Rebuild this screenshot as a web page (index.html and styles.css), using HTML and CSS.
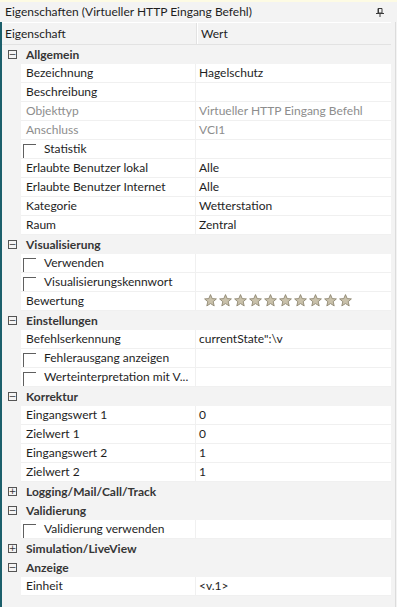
FILE: index.html
```html
<!DOCTYPE html>
<html>
<head>
    <meta charset="UTF-8">
    <title>Eigenschaften</title>
    <link rel="stylesheet" href="styles.css">
</head>
<body>
    <div class="topline"></div>
    <div class="titlebar">
        <span>Eigenschaften (Virtueller HTTP Eingang Befehl)</span>
        <svg class="pin" width="8" height="9" viewBox="0 0 8 9">
            <path d="M2 0.5h4v4.5H2z" fill="none" stroke="#3a3a3a"/>
            <path d="M2.5 0.5v4.5" stroke="#3a3a3a"/>
            <path d="M0 5.5h8" stroke="#3a3a3a"/>
            <path d="M4 5.5v3.5" stroke="#3a3a3a"/>
        </svg>
    </div>

    <div class="panel">
        <div class="grid">
            <div class="header">
                <div class="hcell name-col">Eigenschaft</div>
                <div class="hcell value-col">Wert</div>
            </div>

            <div class="cat"><span class="exp">&minus;</span>Allgemein</div>
            <div class="row"><div class="name">Bezeichnung</div><div class="value">Hagelschutz</div></div>
            <div class="row"><div class="name">Beschreibung</div><div class="value"></div></div>
            <div class="row dis"><div class="name">Objekttyp</div><div class="value">Virtueller HTTP Eingang Befehl</div></div>
            <div class="row dis"><div class="name">Anschluss</div><div class="value">VCI1</div></div>
            <div class="row"><div class="name"><span class="check"></span>Statistik</div><div class="value"></div></div>
            <div class="row"><div class="name">Erlaubte Benutzer lokal</div><div class="value">Alle</div></div>
            <div class="row"><div class="name">Erlaubte Benutzer Internet</div><div class="value">Alle</div></div>
            <div class="row"><div class="name">Kategorie</div><div class="value">Wetterstation</div></div>
            <div class="row"><div class="name">Raum</div><div class="value">Zentral</div></div>

            <div class="cat"><span class="exp">&minus;</span>Visualisierung</div>
            <div class="row"><div class="name"><span class="check"></span>Verwenden</div><div class="value"></div></div>
            <div class="row"><div class="name"><span class="check"></span>Visualisierungskennwort</div><div class="value"></div></div>
            <div class="row"><div class="name">Bewertung</div>
                <div class="value stars">
                    <svg width="150" height="13" viewBox="0 0 150 13">
                        <defs>
                            <path id="star" d="M6.5 0.6l1.7 4 4.2 0.3-3.2 2.8 1 4.2-3.7-2.3-3.7 2.3 1-4.2-3.2-2.8 4.2-0.3z"/>
                        </defs>
                        <g fill="#c9c1ab" stroke="#8f8772" stroke-width="0.9">
                            <use href="#star" x="0"/>
                            <use href="#star" x="15"/>
                            <use href="#star" x="30"/>
                            <use href="#star" x="45"/>
                            <use href="#star" x="60"/>
                            <use href="#star" x="75"/>
                            <use href="#star" x="90"/>
                            <use href="#star" x="105"/>
                            <use href="#star" x="120"/>
                            <use href="#star" x="135"/>
                        </g>
                    </svg>
                </div>
            </div>

            <div class="cat"><span class="exp">&minus;</span>Einstellungen</div>
            <div class="row"><div class="name">Befehlserkennung</div><div class="value">currentState":\v</div></div>
            <div class="row"><div class="name"><span class="check"></span>Fehlerausgang anzeigen</div><div class="value"></div></div>
            <div class="row"><div class="name"><span class="check"></span>Werteinterpretation mit V...</div><div class="value"></div></div>

            <div class="cat"><span class="exp">&minus;</span>Korrektur</div>
            <div class="row"><div class="name">Eingangswert 1</div><div class="value">0</div></div>
            <div class="row"><div class="name">Zielwert 1</div><div class="value">0</div></div>
            <div class="row"><div class="name">Eingangswert 2</div><div class="value">1</div></div>
            <div class="row"><div class="name">Zielwert 2</div><div class="value">1</div></div>

            <div class="cat"><span class="exp">+</span>Logging/Mail/Call/Track</div>
            <div class="cat"><span class="exp">&minus;</span>Validierung</div>
            <div class="row"><div class="name"><span class="check"></span>Validierung verwenden</div><div class="value"></div></div>
            <div class="cat"><span class="exp">+</span>Simulation/LiveView</div>
            <div class="cat"><span class="exp">&minus;</span>Anzeige</div>
            <div class="row"><div class="name">Einheit</div><div class="value">&lt;v.1&gt;</div></div>
        </div>
        <div class="scroll"></div>
    </div>
</body>
</html>
```

FILE: styles.css
```css
body {
    margin: 0;
    width: 397px;
    height: 607px;
    overflow: hidden;
    background-color: #f3f3f3;
    font-family: "Lato", "Noto Sans", sans-serif;
    font-size: 12px;
    color: #1e1e1e;
}

.topline {
    height: 2px;
    background-color: #fdfbe4;
}

.titlebar {
    display: flex;
    justify-content: space-between;
    align-items: center;
    height: 19px;
    padding: 0 13px 1px 5px;
}

.pin {
    margin-top: 1px;
}

.panel {
    display: flex;
    height: 585px;
    border-left: 2px solid #1b5f6b;
}

.grid {
    width: 389px;
}

.scroll {
    width: 4px;
    border-right: 1px solid #dcdcdc;
}

/* header row */
.header {
    display: flex;
    height: 21px;
    border-top: 1px solid #fff;
    border-bottom: 1px solid #e2e2e2;
}

.hcell {
    display: flex;
    align-items: center;
    box-sizing: border-box;
}

.header .name-col {
    width: 195px;
    padding-left: 3px;
    border-right: 1px solid #e2e2e2;
}

.header .value-col {
    flex: 1;
    padding-left: 3px;
    border-left: 1px solid #fff;
}

/* categories */
.cat {
    display: flex;
    align-items: center;
    height: 19px;
    padding-bottom: 1px;
    box-sizing: border-box;
    font-weight: bold;
    color: #363636;
}

.exp {
    display: inline-flex;
    justify-content: center;
    align-items: center;
    width: 9px;
    height: 9px;
    margin: 1px 9px 0 6px;
    border: 1px solid #555;
    box-sizing: border-box;
    font-family: "DejaVu Sans", sans-serif;
    font-weight: normal;
    font-size: 9px;
    line-height: 1;
    color: #333;
}

/* property rows */
.row {
    display: flex;
    height: 19px;
    margin-left: 19px;
    background-color: #fff;
    box-sizing: border-box;
    border-bottom: 1px solid #f0f0f0;
}

.name {
    display: flex;
    align-items: center;
    width: 175px;
    padding: 0 0 1px 5px;
    box-sizing: border-box;
    border-right: 1px solid #f0f0f0;
    white-space: nowrap;
}

.value {
    display: flex;
    align-items: center;
    flex: 1;
    padding: 0 0 1px 3px;
    white-space: nowrap;
}

.dis .name,
.dis .value {
    color: #8d8d8d;
}

.check {
    display: inline-block;
    width: 13px;
    height: 14px;
    margin: 4px 8px 0 -3px;
    align-self: flex-start;
    box-sizing: border-box;
    border-top: 1px solid #5f5f5f;
    border-left: 1px solid #5f5f5f;
}

.stars svg {
    display: block;
    margin-left: 5px;
}
```
